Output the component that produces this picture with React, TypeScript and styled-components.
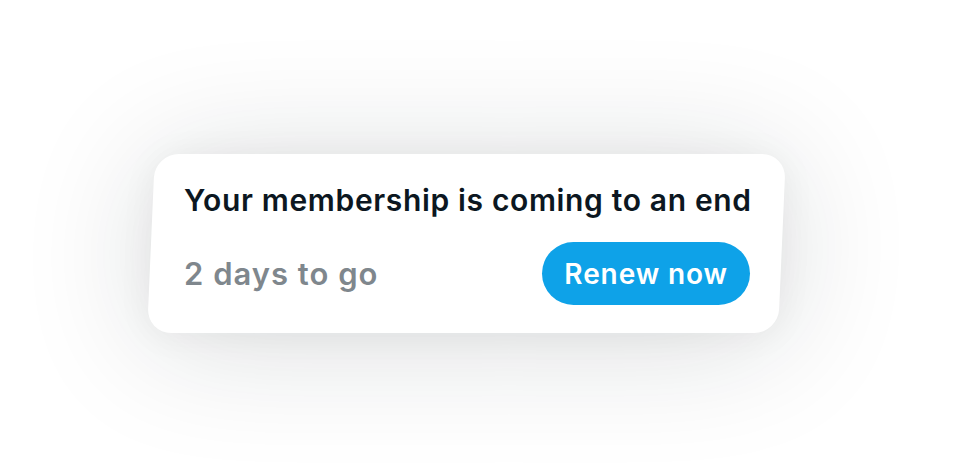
import styled, { createGlobalStyle } from 'styled-components';

const GlobalStyle = createGlobalStyle`
    html, body {
        margin: 0;
        padding: 0;
        background: #ffffff;
    }
    body {
        font-family: Inter, "Noto Sans", sans-serif;
        -webkit-font-smoothing: antialiased;
    }
`;

const Stage = styled.div`
    width: 958px;
    height: 464px;
    box-sizing: border-box;
    padding: 154px 0 0 151px;
    overflow: hidden;
`;

const Card = styled.div`
    position: relative;
    width: 631px;
    height: 179px;
    box-sizing: border-box;
    padding: 28px 32px 0 33px;
    display: flex;
    flex-direction: column;
    gap: 24px;

    &::before {
        content: '';
        position: absolute;
        inset: 0;
        border-radius: 24px;
        background: #ffffff;
        transform: skewX(-2.5deg);
        box-shadow: 0 8px 130px rgba(20, 30, 40, 0.16), 0 2px 36px rgba(20, 30, 40, 0.05);
        z-index: 0;
    }
`;

const Title = styled.h2`
    position: relative;
    margin: 0;
    font-size: 30px;
    line-height: 36px;
    font-weight: 600;
    color: #0c1721;
    letter-spacing: 0.65px;
    white-space: nowrap;
`;

const Row = styled.div`
    position: relative;
    display: flex;
    align-items: center;
    justify-content: space-between;
`;

const Countdown = styled.span`
    font-size: 31px;
    line-height: 36px;
    font-weight: 600;
    color: #7f878d;
    letter-spacing: 1px;
`;

const RenewButton = styled.button`
    height: 63px;
    padding: 0 22px;
    border: none;
    border-radius: 32px;
    background: #0ea2e8;
    color: #ffffff;
    font-family: Inter, "Noto Sans", sans-serif;
    font-size: 28px;
    font-weight: 600;
    letter-spacing: 0.9px;
    cursor: pointer;
`;

export default function App() {
    return (
        <>
            <GlobalStyle />
            <Stage>
                <Card>
                    <Title>Your membership is coming to an end</Title>
                    <Row>
                        <Countdown>2 days to go</Countdown>
                        <RenewButton>Renew now</RenewButton>
                    </Row>
                </Card>
            </Stage>
        </>
    );
}
